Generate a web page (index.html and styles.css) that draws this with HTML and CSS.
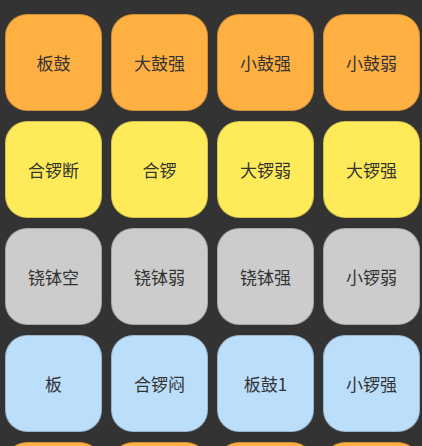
FILE: index.html
```html
<!DOCTYPE html>
<html lang="zh-CN">
<head>
  <meta charset="UTF-8">
  <title>锣鼓</title>
  <link rel="stylesheet" href="styles.css">
</head>
<body>
  <div class="pad-grid">
    <button class="pad orange">板鼓</button>
    <button class="pad orange">大鼓强</button>
    <button class="pad orange">小鼓强</button>
    <button class="pad orange">小鼓弱</button>

    <button class="pad yellow">合锣断</button>
    <button class="pad yellow">合锣</button>
    <button class="pad yellow">大锣弱</button>
    <button class="pad yellow">大锣强</button>

    <button class="pad gray">铙钵空</button>
    <button class="pad gray">铙钵弱</button>
    <button class="pad gray">铙钵强</button>
    <button class="pad gray">小锣弱</button>

    <button class="pad blue">板</button>
    <button class="pad blue">合锣闷</button>
    <button class="pad blue">板鼓1</button>
    <button class="pad blue">小锣强</button>

    <button class="pad orange"></button>
    <button class="pad orange"></button>
    <button class="pad orange"></button>
    <button class="pad orange"></button>
  </div>
</body>
</html>
```

FILE: styles.css
```css
html, body {
  margin: 0;
  height: 100%;
  overflow: hidden;
}

body {
  background: #333333;
  font-family: "Noto Sans CJK SC", "Noto Sans", sans-serif;
}

.pad-grid {
  display: grid;
  grid-template-columns: repeat(4, 97px);
  grid-auto-rows: 97px;
  column-gap: 9px;
  row-gap: 10px;
  padding: 14px 0 0 5px;
}

.pad {
  border: 1px solid rgba(0, 0, 0, 0.18);
  border-radius: 22px;
  font-family: inherit;
  font-size: 17px;
  color: #333;
  padding: 0;
  display: flex;
  align-items: center;
  justify-content: center;
  cursor: pointer;
}

.orange { background: #ffb042; }
.yellow { background: #ffeb59; }
.gray   { background: #cccccc; }
.blue   { background: #bbdefb; }
```
